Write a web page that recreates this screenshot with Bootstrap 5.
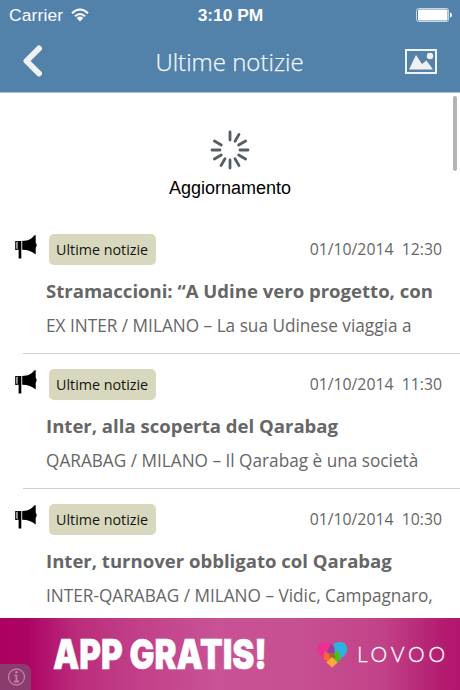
<!DOCTYPE html>
<html lang="it">
<head>
<meta charset="utf-8">
<meta name="viewport" content="width=device-width, initial-scale=1">
<title>Ultime notizie</title>
<link href="https://cdn.jsdelivr.net/npm/bootstrap@5.3.0/dist/css/bootstrap.min.css" rel="stylesheet">
<style>
body{font-family:"Open Sans",sans-serif;height:690px;color:#666}
svg{display:block;flex:none}
.top-area{background:#5282aa;height:93px;border-bottom:1px solid #a9c0d4}
.status{height:30px;font:17.4px/30px "Liberation Sans",Arial,sans-serif;padding:0 8px 0 9px}
.status .side{width:120px}
.carrier{letter-spacing:.15px}
.title-bar{height:62px;padding:0 23px 0 22px}
.title-bar h1{font-size:24px;line-height:62px;font-weight:300;color:#f4f7fa;-webkit-text-stroke:.25px #f4f7fa;padding-top:1px}
.side-btn{width:60px}
.refresh{height:126px;padding-top:37px;color:#000;font:18px/20px "Liberation Sans",Arial,sans-serif}
.thumb{top:96px;right:3px;width:4px;height:75px;background:#b4b4b4}
.news{height:135px;padding-top:15px}
.news::after{content:"";display:block;height:1px;background:#d0d0d0;margin:auto 0 0 23px}
.news-head{height:31px;padding:0 18px 0 15px}
.horn{margin-top:-5px}
.tag{width:107px;height:31px;line-height:31px;margin-left:12px;padding-left:7px;background:#d7d8be;border-radius:5px;color:#15150f;font-size:14.3px;white-space:nowrap}
.stamp{font-size:15.8px;white-space:pre}
.headline{font-size:18.56px;line-height:24px;margin:14px 0 0 46px;font-weight:700;white-space:nowrap}
.summary{font-size:17.22px;line-height:24px;margin:11px 0 0 46px;white-space:nowrap}
.ad{height:72px;background:linear-gradient(90deg,#ab0060 0,#ad0464 6%,#bb2d7b 17%,#c24089 30%,#c85295 47%,#c75092 65%,#c24288 83%,#b31c70 96%,#b2166c 100%)}
</style>
<script src="https://cdn.jsdelivr.net/npm/bootstrap@5.3.0/dist/js/bootstrap.bundle.min.js"></script>
</head>
<body class="d-flex flex-column overflow-hidden bg-white position-relative">
<svg width="0" height="0" class="position-absolute" aria-hidden="true">
<symbol id="horn" viewBox="0 0 22 24"><path d="M2.500 6h3.800v8.800H2.500zM7.200 6C13 6 16.500 4 19.500.3h1.200v7.800c1.300.7 1.300 3.700 0 4.400v7C17 16.500 13 14.800 7.200 14.800zM3.600 14h2.700v9.500H3.600z"/><path d="M2.500 6.500H.8v7.800h1.700" fill="none" stroke="#000" stroke-width="1.200"/></symbol>
</svg>
<header class="top-area flex-shrink-0">
  <div class="status d-flex justify-content-between align-items-center text-white">
    <div class="side d-flex align-items-center gap-2"><span class="carrier">Carrier</span>
      <svg width="18" height="14" viewBox="0 0 18 14" fill="none" stroke="#fff" stroke-width="2"><path d="M1 5.200Q9-2.200 17 5.200M4 8.300Q9 3.700 14 8.300"/><path d="M5.700 9.900Q9 7.200 12.300 9.900L9 13.500z" fill="#fff" stroke="none"/></svg>
    </div>
    <span class="fw-bold">3:10 PM</span>
    <div class="side d-flex justify-content-end">
      <svg width="36" height="14" viewBox="0 0 36 14"><rect x=".5" y=".5" width="32" height="13" rx="2" fill="none" stroke="#c5d6e4"/><rect x="2" y="1.500" width="29.500" height="11" rx="1" fill="#fff"/><path d="M34 4.500q2 .5 2 2.500t-2 2.500z" fill="#fff"/></svg>
    </div>
  </div>
  <div class="title-bar d-flex justify-content-between align-items-center">
    <div class="side-btn"><svg width="22" height="32" viewBox="0 0 22 32"><path d="M17 3.500L4.500 16l12.500 12.500" fill="none" stroke="#f0f0f0" stroke-width="6" stroke-linecap="round" stroke-linejoin="round"/></svg></div>
    <h1 class="m-0">Ultime notizie</h1>
    <div class="side-btn d-flex justify-content-end"><svg width="32" height="25" viewBox="0 0 32 25"><rect x="1" y="1" width="30" height="23" fill="none" stroke="#f0f4f7" stroke-width="2"/><path d="M4 20.500L11 6l6 9 4.500-3.500L28 20.500z" fill="#f0f0f0"/><circle cx="25" cy="7" r="3.200" fill="#f0f0f0"/></svg></div>
  </div>
</header>
<div class="thumb position-absolute rounded-pill"></div>
<section class="refresh d-flex flex-column align-items-center flex-shrink-0">
  <svg width="40" height="40" viewBox="-20 -20 40 40" stroke="#575d64" stroke-width="2.800" stroke-linecap="round"><path d="M0-10V-18M0 10V18M-10 0H-18M10 0H18M5-8.700L9-15.600M8.700-5L15.600-9M8.700 5L15.600 9M5 8.700L9 15.600M-5 8.700L-9 15.600M-8.700 5L-15.600 9M-8.700-5L-15.600-9"/></svg>
  <span class="mt-2">Aggiornamento</span>
</section>
<main class="flex-grow-1 overflow-hidden">
  <article class="news d-flex flex-column">
    <div class="news-head d-flex align-items-center"><svg class="horn" width="22" height="24"><use href="#horn"/></svg><span class="tag">Ultime notizie</span><time class="stamp ms-auto">01/10/2014  12:30</time></div>
    <h2 class="headline">Stramaccioni: “A Udine vero progetto, con</h2>
    <p class="summary">EX INTER / MILANO – La sua Udinese viaggia a</p>
  </article>
  <article class="news d-flex flex-column">
    <div class="news-head d-flex align-items-center"><svg class="horn" width="22" height="24"><use href="#horn"/></svg><span class="tag">Ultime notizie</span><time class="stamp ms-auto">01/10/2014  11:30</time></div>
    <h2 class="headline">Inter, alla scoperta del Qarabag</h2>
    <p class="summary">QARABAG / MILANO – Il Qarabag è una società</p>
  </article>
  <article class="news d-flex flex-column">
    <div class="news-head d-flex align-items-center"><svg class="horn" width="22" height="24"><use href="#horn"/></svg><span class="tag">Ultime notizie</span><time class="stamp ms-auto">01/10/2014  10:30</time></div>
    <h2 class="headline">Inter, turnover obbligato col Qarabag</h2>
    <p class="summary">INTER-QARABAG / MILANO – Vidic, Campagnaro,</p>
  </article>
</main>
<footer class="ad flex-shrink-0">
  <svg width="460" height="72" viewBox="0 0 460 72">
    <path d="M0 46h25q6 2 6 8v18H0z" fill="#8b3c6e"/>
    <g fill="none" stroke="#c77ba6" stroke-width="1.300"><circle cx="16.500" cy="59" r="8"/><path d="M16.500 57v6.500M14.500 57.500h2M14 63.500h5" stroke-width="1.800"/></g><circle cx="16.500" cy="54.300" r="1.300" fill="#c77ba6"/>
    <text x="53" y="51" textLength="214" lengthAdjust="spacingAndGlyphs" font-family="Inter,Arial,sans-serif" font-weight="900" font-size="41" fill="#fff" stroke="#fff" stroke-width=".5" stroke-linejoin="round">APP GRATIS!</text>
    <g><path d="M332 49.500L321 38c-6-6-3-14 4-14q5 0 7 3l8 9z" fill="#ed2f91"/><path d="M332 49.500l12-11.500c6-6 3-14-4-14-7 0-11 5-11 11z" fill="#2fb1df"/><path d="M332 26c3 3 4 8 1 12l-5-4c0-3 1-6 4-8z" fill="#9a3c9a"/><path d="M325 33l12 12-5 4.500-8-9q-1-4 1-7.500z" fill="#f36a35"/><path d="M337 32q4.500 6 3.500 10l-3.500 3-5-5z" fill="#55b81b"/><path d="M332 34l4 5-4 3-3-4z" fill="#a8671c"/><path d="M332 39l5.500 5.500-5.500 5-5.500-5z" fill="#ffa640"/></g>
    <g font-family="Lato,sans-serif" font-size="21" font-weight="300" fill="#fff" stroke="#fff" stroke-width=".3"><text x="357" y="43.500" textLength="88" lengthAdjust="spacing">LOVOO</text></g>
  </svg>
</footer>
</body>
</html>
